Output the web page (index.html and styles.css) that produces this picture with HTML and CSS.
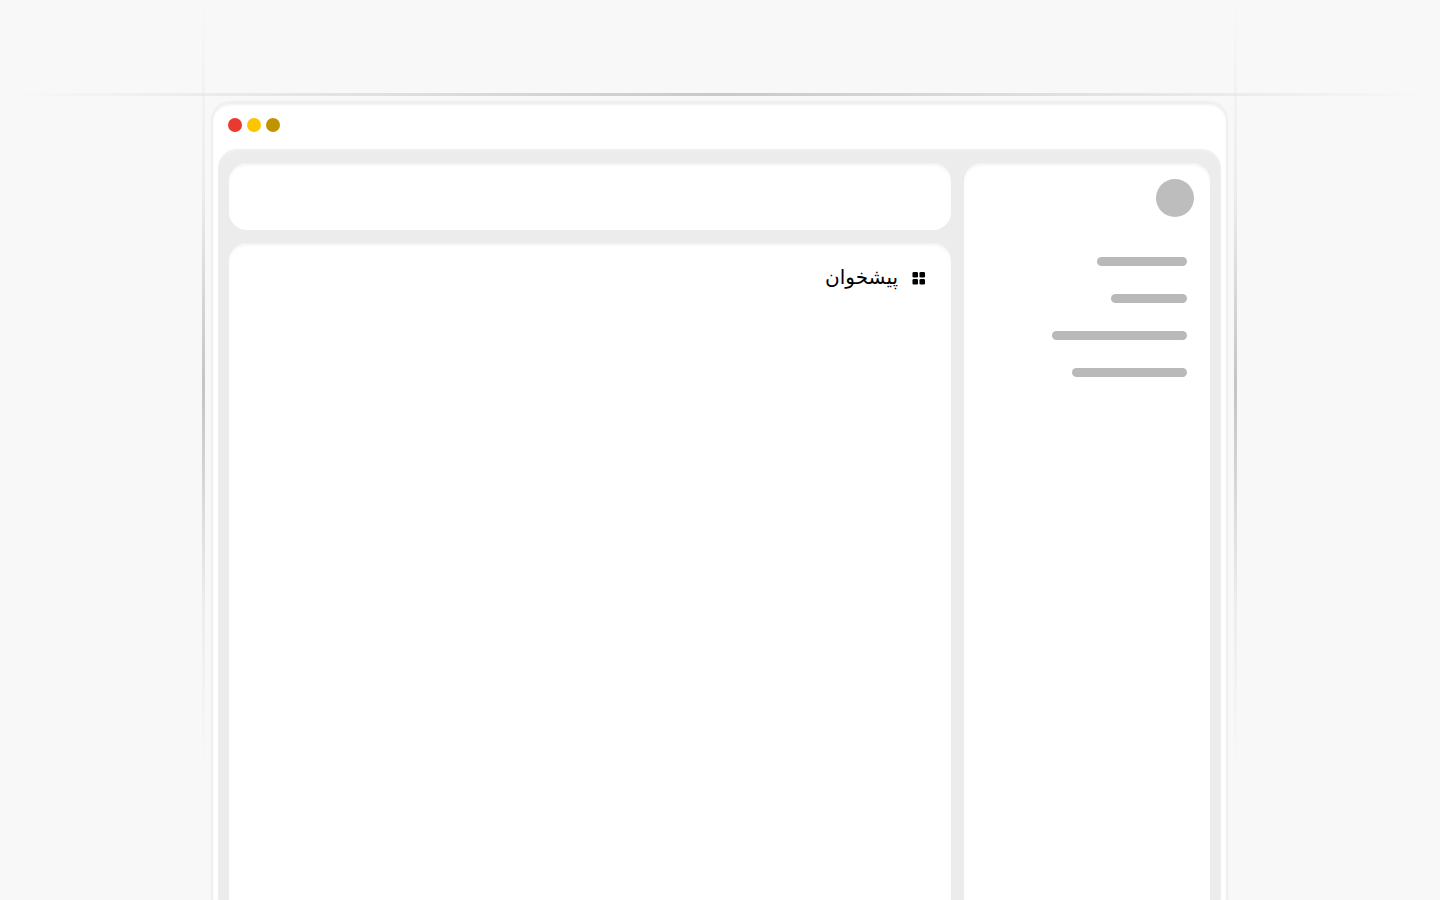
FILE: index.html
```html
<!DOCTYPE html>
<html lang="fa">
<head>
    <meta charset="UTF-8">
    <meta name="viewport" content="width=device-width, initial-scale=1.0">
    <title>پیشخوان</title>
    <link rel="stylesheet" href="styles.css">
</head>
<body>
<div class="guide guide-top"></div>
<div class="guide guide-left"></div>
<div class="guide guide-right"></div>

<div class="window">
    <div class="window-bar">
        <span class="dot dot-red"></span>
        <span class="dot dot-yellow"></span>
        <span class="dot dot-olive"></span>
    </div>
    <div class="window-body" dir="rtl">
        <aside class="sidebar">
            <div class="avatar"></div>
            <div class="menu">
                <span class="menu-line line-1"></span>
                <span class="menu-line line-2"></span>
                <span class="menu-line line-3"></span>
                <span class="menu-line line-4"></span>
            </div>
        </aside>
        <div class="content">
            <div class="card topbar"></div>
            <div class="card main">
                <div class="main-title">
                    <svg class="grid-icon" width="14" height="14" viewBox="0 0 14 14">
                        <rect x="0.5" y="1" width="5.5" height="5.5" rx="1.3"/>
                        <rect x="7.5" y="1" width="5.5" height="5.5" rx="1.3"/>
                        <rect x="0.5" y="8" width="5.5" height="5.5" rx="1.3"/>
                        <rect x="7.5" y="8" width="5.5" height="5.5" rx="1.3"/>
                    </svg>
                    <span class="title-text">پیشخوان</span>
                </div>
            </div>
        </div>
    </div>
</div>
</body>
</html>
```

FILE: styles.css
```css
html, body {
    height: 100%;
}

body {
    margin: 0;
    padding-top: 101px;
    box-sizing: border-box;
    background-color: #f8f8f8;
    font-family: "DejaVu Sans", sans-serif;
    color: #000000;
    overflow: hidden;
    position: relative;
}

/* Decorative guide lines */
.guide {
    position: absolute;
}

.guide-top {
    left: 0;
    right: 0;
    top: 93px;
    height: 3px;
    background: linear-gradient(90deg, rgba(190, 190, 190, 0) 1%, rgba(225, 225, 225, 0.7) 18%, #c9c9c9 50%, rgba(225, 225, 225, 0.7) 82%, rgba(190, 190, 190, 0) 99%);
}

.guide-left,
.guide-right {
    top: 0;
    width: 3px;
    height: 770px;
    background: linear-gradient(180deg, rgba(190, 190, 190, 0) 0%, rgba(225, 225, 225, 0.5) 25%, #c4c4c4 50%, rgba(225, 225, 225, 0.5) 78%, rgba(190, 190, 190, 0) 100%);
}

.guide-left {
    left: 202px;
}

.guide-right {
    left: 1234px;
}

/* Window */
.window {
    display: flex;
    flex-direction: column;
    width: 1017px;
    height: 100%;
    margin-left: 211px;
    padding: 0 5px;
    box-sizing: border-box;
    background-color: #ffffff;
    border: 2px solid #f0f0f0;
    border-top-width: 3px;
    border-bottom: none;
    border-radius: 20px 20px 0 0;
    box-shadow: 0 0 2px #f0f0f0, inset 0 1px 2px #f2f2f2;
    position: relative;
}

.window-bar {
    display: flex;
    gap: 5px;
    height: 45px;
    flex-shrink: 0;
    padding: 14px 10px 0;
    box-sizing: border-box;
}

.dot {
    width: 14px;
    height: 14px;
    border-radius: 50%;
}

.dot-red {
    background-color: #ea3a2f;
}

.dot-yellow {
    background-color: #fdc500;
}

.dot-olive {
    background-color: #c09400;
}

.window-body {
    flex: 1;
    display: flex;
    gap: 13px;
    padding: 14px 11px 0;
    background-color: #ececec;
    border-radius: 20px 20px 0 0;
    box-shadow: inset 0 2px 3px #f1f1f1, 0 0 1px #f0f0f0;
}

/* Sidebar */
.sidebar {
    width: 246px;
    flex-shrink: 0;
    padding: 16px;
    box-sizing: border-box;
    background-color: #ffffff;
    border-radius: 18px 18px 0 0;
    box-shadow: inset 0 3px 3px -1px #f2f2f2;
}

.avatar {
    width: 38px;
    height: 38px;
    border-radius: 50%;
    background-color: #bdbdbd;
}

.menu {
    display: flex;
    flex-direction: column;
    align-items: flex-start;
    gap: 28px;
    margin-top: 40px;
    padding-right: 7px;
}

.menu-line {
    height: 9px;
    border-radius: 5px;
    background-color: #b9b9b9;
}

.line-1 {
    width: 90px;
}

.line-2 {
    width: 76px;
}

.line-3 {
    width: 135px;
}

.line-4 {
    width: 115px;
}

/* Content */
.content {
    flex: 1;
    display: flex;
    flex-direction: column;
    gap: 13px;
}

.card {
    background-color: #ffffff;
    border-radius: 18px;
    box-shadow: inset 0 3px 3px -1px #f2f2f2;
}

.topbar {
    height: 67px;
    flex-shrink: 0;
}

.main {
    flex: 1;
    border-radius: 18px 18px 0 0;
    padding: 20px 25px;
}

.main-title {
    display: flex;
    align-items: center;
    gap: 14px;
    font-size: 20px;
    line-height: 28px;
}

.title-text {
    margin-bottom: 2px;
}

.grid-icon {
    fill: #000000;
}
```
